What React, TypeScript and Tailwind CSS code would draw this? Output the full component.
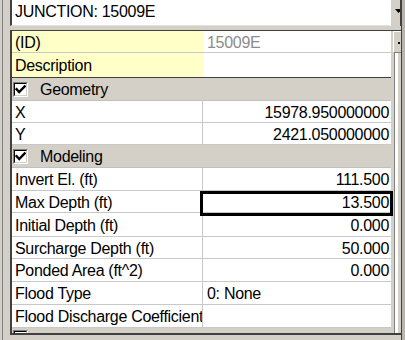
import React from "react";

type Row =
  | {
      kind: "prop";
      label: string;
      value: string;
      h: number;
      align?: "left" | "right";
      yellow?: boolean;
      dim?: boolean;
      selected?: boolean;
      darkBottom?: boolean;
    }
  | { kind: "section"; label: string; h: number };

const rows: Row[] = [
  { kind: "prop", label: "(ID)", value: "15009E", h: 22, align: "left", yellow: true, dim: true },
  { kind: "prop", label: "Description", value: "", h: 25, yellow: true, darkBottom: true },
  { kind: "section", label: "Geometry", h: 23 },
  { kind: "prop", label: "X", value: "15978.950000000", h: 22 },
  { kind: "prop", label: "Y", value: "2421.050000000", h: 22 },
  { kind: "section", label: "Modeling", h: 23 },
  { kind: "prop", label: "Invert El. (ft)", value: "111.500", h: 23 },
  { kind: "prop", label: "Max Depth (ft)", value: "13.500", h: 22, selected: true },
  { kind: "prop", label: "Initial Depth (ft)", value: "0.000", h: 24 },
  { kind: "prop", label: "Surcharge Depth (ft)", value: "50.000", h: 22 },
  { kind: "prop", label: "Ponded Area (ft^2)", value: "0.000", h: 23 },
  { kind: "prop", label: "Flood Type", value: "0: None", h: 23, align: "left" },
  { kind: "prop", label: "Flood Discharge Coefficient", value: "", h: 23 },
];

function CheckBox({ checked }: { checked: boolean }) {
  return (
    <div className="w-[15px] h-[15px] border-t border-l border-t-[#808080] border-l-[#808080] border-b border-r border-b-white border-r-white shrink-0">
      <div className="w-full h-full border-t border-l border-t-black border-l-black border-b border-r border-b-[#d4d0c8] border-r-[#d4d0c8] bg-white flex items-center justify-center">
        {checked && (
          <svg width="11" height="11" viewBox="0 0 11 11">
            <path d="M1.5 5.2 L4.2 8 L9.6 2.4" fill="none" stroke="black" strokeWidth="2.4" strokeLinecap="square" />
          </svg>
        )}
      </div>
    </div>
  );
}

export default function App() {
  return (
    <div className="w-[405px] h-[340px] overflow-hidden bg-[#d4d0c8] flex font-['Liberation_Sans',Arial,sans-serif] text-[16px] tracking-[-0.3px] text-black">
      {/* left frame */}
      <div className="w-[2px] shrink-0" />
      <div className="w-px shrink-0 bg-[#808080]" />
      <div className="w-[7px] shrink-0" />

      {/* main column */}
      <div className="w-[391px] shrink-0 flex flex-col">
        {/* combo */}
        <div className="h-[27px] flex">
          <div className="w-[380px] h-[26px] bg-white border-l-2 border-l-[#404040] border-b border-b-[#e4e2dc] flex items-start pl-[3px] pt-[3px] leading-[18px]">
            JUNCTION: 15009E
          </div>
          <div className="w-[11px] h-[26px] bg-[#d4d0c8] border-l border-l-white border-r border-r-[#404040] relative overflow-hidden">
            <svg className="absolute left-[4px] top-[9px]" width="8" height="5" viewBox="0 0 8 5">
              <path d="M0 0 H7 L3.5 4 Z" fill="black" />
            </svg>
          </div>
        </div>
        <div className="h-[3px]" />

        {/* grid */}
        <div className="h-[305px] flex border-t border-t-[#404040] border-l-2 border-l-[#404040] border-b-2 border-b-[#404040]">
          <div className="w-[379px] shrink-0 flex flex-col bg-white">
            {rows.map((r, i) =>
              r.kind === "section" ? (
                <div
                  key={i}
                  style={{ height: r.h }}
                  className="shrink-0 bg-[#d4d0c8] border-b border-b-[#c0c0c0] flex items-center pl-px gap-[12px]"
                >
                  <CheckBox checked />
                  <span className="leading-[18px] pt-[2px]">{r.label}</span>
                </div>
              ) : (
                <div
                  key={i}
                  style={{ height: r.h }}
                  className={
                    "shrink-0 flex border-b " +
                    (r.darkBottom ? "border-b-[#404040]" : "border-b-[#c8c8c8]")
                  }
                >
                  <div
                    className={
                      "w-[191px] shrink-0 pl-[3px] flex items-center whitespace-nowrap overflow-hidden leading-[18px] pt-[2px] " +
                      (r.yellow ? "bg-[#ffffc8]" : "border-r border-r-[#c8c8c8]")
                    }
                  >
                    {r.label}
                  </div>
                  <div
                    className={
                      "relative flex-1 flex items-center leading-[18px] pt-[2px] " +
                      (r.align === "left" ? "justify-start pl-[4px] " : "justify-end pr-[2px] ") +
                      (r.dim ? "text-[#8c8c8c]" : "")
                    }
                  >
                    {r.value}
                    {r.selected && (
                      <div className="absolute left-[-3px] right-[-2px] top-0 bottom-[-4px] border-[3px] border-black" />
                    )}
                  </div>
                </div>
              )
            )}
            {/* partial next section */}
            <div className="flex-1 bg-[#d4d0c8] pl-px pt-[2px] overflow-hidden">
              <CheckBox checked={false} />
            </div>
          </div>

          {/* scrollbar strip */}
          <div className="flex-1 flex flex-col">
            <div className="h-[22px] flex">
              <div className="w-[2px] bg-[#d4d0c8]" />
              <div className="flex-1 bg-[#d4d0c8] border-l border-l-white border-t border-t-white border-b border-b-[#808080] relative">
                <div className="absolute left-[4px] top-[10px] w-[2px] h-[2px] bg-black" />
              </div>
            </div>
            <div className="flex-1 flex">
              <div className="w-[3px] bg-[#d4d0c8]" />
              <div className="w-px bg-[#808080]" />
              <div className="w-[3px] bg-white" />
              <div className="flex-1 bg-[#d4d0c8]" />
            </div>
          </div>
        </div>
      </div>

      {/* right frame */}
      <div className="w-px shrink-0 bg-[#404040]" />
      <div className="flex-1 bg-[#b8b5ae]" />
    </div>
  );
}
